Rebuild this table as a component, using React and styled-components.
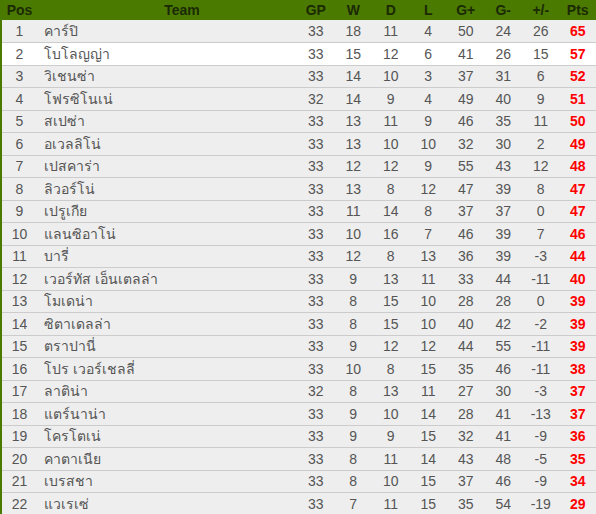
import React from 'react';
import styled, { createGlobalStyle } from 'styled-components';

const rows = [
  [1, 'คาร์ปิ', 33, 18, 11, 4, 50, 24, 26, 65],
  [2, 'โบโลญญ่า', 33, 15, 12, 6, 41, 26, 15, 57],
  [3, 'วิเชนซ่า', 33, 14, 10, 3, 37, 31, 6, 52],
  [4, 'โฟรซิโนเน่', 32, 14, 9, 4, 49, 40, 9, 51],
  [5, 'สเปซ่า', 33, 13, 11, 9, 46, 35, 11, 50],
  [6, 'อเวลลิโน่', 33, 13, 10, 10, 32, 30, 2, 49],
  [7, 'เปสคาร่า', 33, 12, 12, 9, 55, 43, 12, 48],
  [8, 'ลิวอร์โน่', 33, 13, 8, 12, 47, 39, 8, 47],
  [9, 'เปรูเกีย', 33, 11, 14, 8, 37, 37, 0, 47],
  [10, 'แลนซิอาโน่', 33, 10, 16, 7, 46, 39, 7, 46],
  [11, 'บารี่', 33, 12, 8, 13, 36, 39, -3, 44],
  [12, 'เวอร์ทัส เอ็นเตลล่า', 33, 9, 13, 11, 33, 44, -11, 40],
  [13, 'โมเดน่า', 33, 8, 15, 10, 28, 28, 0, 39],
  [14, 'ซิตาเดลล่า', 33, 8, 15, 10, 40, 42, -2, 39],
  [15, 'ตราปานี่', 33, 9, 12, 12, 44, 55, -11, 39],
  [16, 'โปร เวอร์เชลลี่', 33, 10, 8, 15, 35, 46, -11, 38],
  [17, 'ลาติน่า', 32, 8, 13, 11, 27, 30, -3, 37],
  [18, 'แตร์นาน่า', 33, 9, 10, 14, 28, 41, -13, 37],
  [19, 'โครโตเน่', 33, 9, 9, 15, 32, 41, -9, 36],
  [20, 'คาตาเนีย', 33, 8, 11, 14, 43, 48, -5, 35],
  [21, 'เบรสชา', 33, 8, 10, 15, 37, 46, -9, 34],
  [22, 'แวเรเซ่', 33, 7, 11, 15, 35, 54, -19, 29],
];

const heads = ['GP', 'W', 'D', 'L', 'G+', 'G-', '+/-'];

function App() {
  return (
    <>
      <GlobalStyle />
      <Table>
        <colgroup>
          <col style={{ width: 36 }} />
          <col style={{ width: 260 }} />
          {heads.map((h) => <col key={h} style={{ width: 37.5 }} />)}
          <col style={{ width: 37.5 }} />
        </colgroup>
        <thead>
          <tr>
            <Th>Pos</Th>
            <TeamTh>Team</TeamTh>
            {heads.map((h) => <Th key={h}>{h}</Th>)}
            <Th>Pts</Th>
          </tr>
        </thead>
        <tbody>
          {rows.map((r) => (
            <Row key={r[0]} light={r[0] === 2}>
              <Td>{r[0]}</Td>
              <TeamTd>{r[1]}</TeamTd>
              {r.slice(2, 9).map((v, i) => <Td key={i}>{v}</Td>)}
              <Pts>{r[9]}</Pts>
            </Row>
          ))}
        </tbody>
      </Table>
    </>
  );
}

export default App;

const GlobalStyle = createGlobalStyle`
  body {
    margin: 0;
    background: #fff;
    font-family: "Liberation Sans", "Noto Sans", sans-serif;
  }
`;

const Table = styled.table`
  width: 596px;
  table-layout: fixed;
  border-collapse: collapse;
  border: 2px solid #4a7a00;
  border-top: 0;
  font-size: 14px;
`;

const Th = styled.th`
  height: 20px;
  padding: 0;
  background: #4a7a00;
  color: #1b2a05;
  font-weight: bold;
  text-align: center;
  line-height: 16px;
`;

const TeamTh = styled(Th)`
  padding-left: 30px;
`;

const Row = styled.tr`
  height: 22.5px;
  background: ${(props) => (props.light ? '#ffffff' : '#eeeeee')};
  border-top: 1px solid #cccccc;
  &:first-child {
    border-top: 0;
  }
`;

const Td = styled.td`
  padding: 0;
  color: #555555;
  text-align: center;
  line-height: 16px;
`;

const TeamTd = styled(Td)`
  text-align: left;
  padding-left: 7px;
`;

const Pts = styled(Td)`
  color: #ff0000;
  font-weight: bold;
`;
